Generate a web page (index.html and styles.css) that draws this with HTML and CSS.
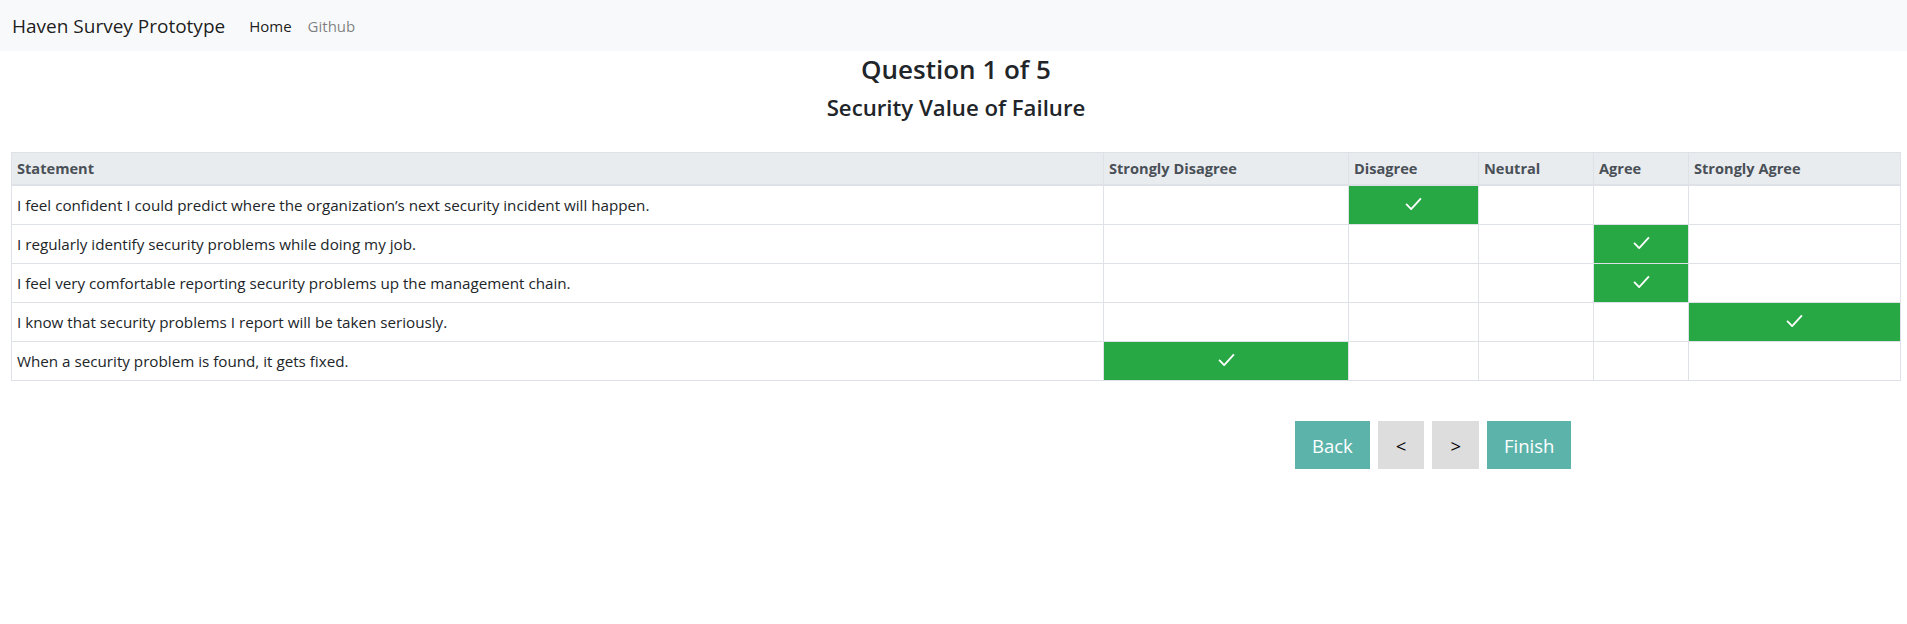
FILE: index.html
```html
<!DOCTYPE html>
<html lang="en">
<head>
<meta charset="utf-8">
<title>Haven Survey Prototype</title>
<link rel="stylesheet" href="styles.css">
</head>
<body>
<nav class="navbar">
  <a class="brand" href="#">Haven Survey Prototype</a>
  <a class="nav-link active" href="#">Home</a>
  <a class="nav-link" href="#">Github</a>
</nav>
<main class="page">
  <h3 class="q-title">Question 1 of 5</h3>
  <h4 class="q-sub">Security Value of Failure</h4>
  <table class="survey">
    <colgroup>
      <col class="c-stmt"><col class="c-sd"><col class="c-d"><col class="c-n"><col class="c-a"><col class="c-sa">
    </colgroup>
    <thead>
      <tr><th>Statement</th><th>Strongly Disagree</th><th>Disagree</th><th>Neutral</th><th>Agree</th><th>Strongly Agree</th></tr>
    </thead>
    <tbody>
      <tr>
        <td>I feel confident I could predict where the organization’s next security incident will happen.</td>
        <td></td>
        <td class="sel"><svg class="chk" viewBox="0 0 18 14"><path d="M1 7.5 L6.5 13 L17 1.5"/></svg></td>
        <td></td><td></td><td></td>
      </tr>
      <tr>
        <td>I regularly identify security problems while doing my job.</td>
        <td></td><td></td><td></td>
        <td class="sel"><svg class="chk" viewBox="0 0 18 14"><path d="M1 7.5 L6.5 13 L17 1.5"/></svg></td>
        <td></td>
      </tr>
      <tr>
        <td>I feel very comfortable reporting security problems up the management chain.</td>
        <td></td><td></td><td></td>
        <td class="sel"><svg class="chk" viewBox="0 0 18 14"><path d="M1 7.5 L6.5 13 L17 1.5"/></svg></td>
        <td></td>
      </tr>
      <tr>
        <td>I know that security problems I report will be taken seriously.</td>
        <td></td><td></td><td></td><td></td>
        <td class="sel"><svg class="chk" viewBox="0 0 18 14"><path d="M1 7.5 L6.5 13 L17 1.5"/></svg></td>
      </tr>
      <tr>
        <td>When a security problem is found, it gets fixed.</td>
        <td class="sel"><svg class="chk" viewBox="0 0 18 14"><path d="M1 7.5 L6.5 13 L17 1.5"/></svg></td>
        <td></td><td></td><td></td><td></td>
      </tr>
    </tbody>
  </table>
  <div class="actions">
    <button class="btn btn-teal">Back</button>
    <button class="btn btn-grey">&lt;</button>
    <button class="btn btn-grey">&gt;</button>
    <button class="btn btn-teal">Finish</button>
  </div>
</main>
</body>
</html>
```
FILE: styles.css
```css
* { box-sizing: border-box; }
html, body { margin: 0; padding: 0; }
body {
  font-family: "Open Sans", "Noto Sans", sans-serif;
  color: #212529;
  background: #fff;
}
.navbar {
  display: flex;
  align-items: center;
  height: 51px;
  padding: 0 12px;
  background: #f8f9fa;
}
.brand {
  font-size: 19px;
  color: rgba(0,0,0,.9);
  text-decoration: none;
  margin-right: 16px;
  line-height: 30px;
}
.nav-link {
  font-size: 15px;
  padding: 0 8px;
  color: rgba(0,0,0,.5);
  text-decoration: none;
  line-height: 24px;
}
.nav-link.active { color: rgba(0,0,0,.9); }
.page {
  padding: 0 6px 0 11px;
}
.q-title {
  margin: 1px 0 0;
  text-align: center;
  font-size: 26px;
  font-weight: 600;
  line-height: 34px;
}
.q-sub {
  margin: 7px 0 0;
  text-align: center;
  font-size: 22.2px;
  font-weight: 600;
  line-height: 29px;
}
.survey {
  width: 100%;
  margin-top: 30px;
  border-collapse: collapse;
  font-size: 15.2px;
}
.c-stmt { width: 1092px; }
.c-sd { width: 245px; }
.c-d { width: 130px; }
.c-n { width: 115px; }
.c-a { width: 95px; }
.c-sa { width: 212px; }
.survey th, .survey td {
  border: 1px solid #dee2e6;
  text-align: left;
  vertical-align: middle;
}
.survey th {
  background: #e9ecef;
  color: #495057;
  font-weight: 700;
  font-size: 14.6px;
  padding: 5px 5px;
  line-height: 21px;
  border-bottom-width: 2px;
}
.survey td {
  padding: 8px 5px;
  line-height: 22px;
}
.survey td.sel {
  background: #28a745;
  text-align: center;
}
.chk {
  width: 17px;
  height: 13px;
  vertical-align: middle;
  position: relative;
  top: -3px;
  fill: none;
  stroke: #fff;
  stroke-width: 2;
}
.actions {
  display: flex;
  gap: 8px;
  margin-top: 40px;
  padding-left: 1284px;
}
.btn {
  height: 48px;
  border: 0;
  border-radius: 0;
  padding: 0 17px;
  font-family: inherit;
  font-size: 18.5px;
}
.btn-teal { background: #5bb3aa; color: #fff; }
.btn-grey { background: #dddddd; color: #000; padding: 0 18px; }
```
